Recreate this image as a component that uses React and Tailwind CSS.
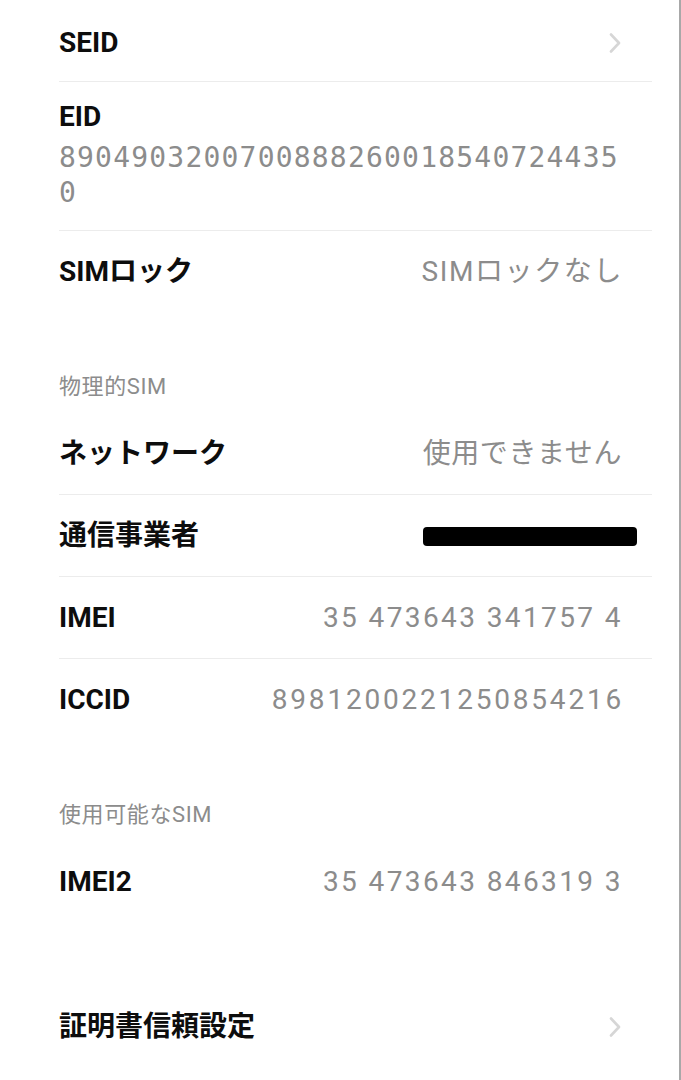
import React from "react";

const labelFont = { fontFamily: 'Roboto, "Noto Sans CJK JP", sans-serif' };

function Chevron() {
  return (
    <svg width="12" height="20" viewBox="0 0 12 20" className="mr-[31px]">
      <path d="M2 1.5 L10 10 L2 18.5" fill="none" stroke="#d6d6d6" strokeWidth="2.6" strokeLinecap="round" strokeLinejoin="round" />
    </svg>
  );
}

function Row({ label, value, valueClass = "", chevron, border = true, children }) {
  return (
    <div className={`flex h-[81px] items-center justify-between ${border ? "border-b border-[#ececec] box-content" : ""}`}>
      <span className="text-[28px] font-bold text-[#0d0d0d] leading-[36px]" style={labelFont}>{label}</span>
      {value && (
        <span className={`text-[28px] text-[#8c8c8c] leading-[36px] ${valueClass}`} style={labelFont}>{value}</span>
      )}
      {children}
      {chevron && <Chevron />}
    </div>
  );
}

function Header({ children }) {
  return (
    <div className="flex h-[101px] items-end pb-[15px]">
      <span className="text-[22px] leading-[22px] tracking-[0.6px] text-[#8c8c8c]" style={labelFont}>{children}</span>
    </div>
  );
}

const digits = "tracking-[2.4px] mr-[29px]";

export default function App() {
  return (
    <div className="flex w-[681px] min-h-[1080px] bg-white">
      <div className="w-[679px] pl-[59px] pr-[27px]">
        <div className="box-border h-[82px] border-b border-[#ececec] flex items-center justify-between pt-[4px]">
          <span className="text-[28px] font-bold text-[#0d0d0d] leading-[36px]" style={labelFont}>SEID</span>
          <Chevron />
        </div>
        <div className="border-b border-[#ececec] pt-[17px] pb-[20px]">
          <div className="text-[28px] font-bold text-[#0d0d0d] leading-[36px]" style={labelFont}>EID</div>
          <div
            className="mt-[5px] w-[566px] break-all text-[28px] leading-[35px] tracking-[1.2px] text-[#8c8c8c]"
            style={{ fontFamily: '"DejaVu Sans Mono", monospace' }}
          >
            89049032007008882600185407244350
          </div>
        </div>
        <Row label="SIMロック" value="SIMロックなし" valueClass="tracking-[1.6px] mr-[29px]" border={false} />
        <Header>物理的SIM</Header>
        <Row label="ネットワーク" value="使用できません" valueClass="tracking-[0.6px] mr-[30px]" />
        <Row label="通信事業者">
          <div className="mr-[15px] mt-[1px] h-[19px] w-[214px] rounded-[4px] bg-black" />
        </Row>
        <Row label="IMEI" value="35 473643 341757 4" valueClass={digits} />
        <Row label="ICCID" value="8981200221250854216" valueClass="tracking-[2.8px] mr-[28px]" border={false} />
        <Header>使用可能なSIM</Header>
        <Row label="IMEI2" value="35 473643 846319 3" valueClass={digits} border={false} />
        <div className="h-[64px]" />
        <Row label="証明書信頼設定" chevron border={false} />
      </div>
      <div className="w-[2px] bg-[#a8a8a8]" />
    </div>
  );
}
